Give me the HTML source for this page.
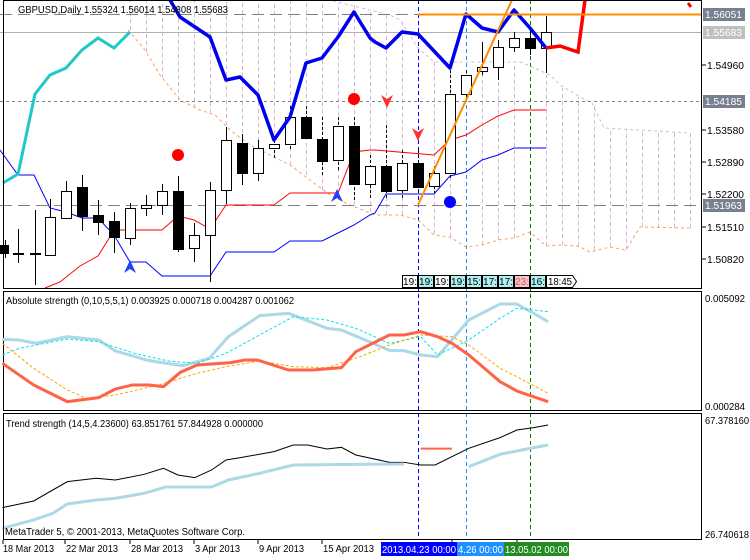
<!DOCTYPE html>
<html><head><meta charset="utf-8"><style>
body{margin:0;background:#fff;width:750px;height:560px;overflow:hidden;font-family:"Liberation Sans",sans-serif}
svg{display:block}
text{font-family:"Liberation Sans",sans-serif;font-size:10px;fill:#000}
</style></head><body>
<svg width="750" height="560" viewBox="0 0 750 560">
<rect width="750" height="560" fill="#fff"/>
<g stroke-dasharray="4,3" stroke-width="1">
<line x1="418.5" y1="0" x2="418.5" y2="540" stroke="#0000ff"/>
<line x1="466.5" y1="0" x2="466.5" y2="540" stroke="#1e90ff"/>
<line x1="530.5" y1="0" x2="530.5" y2="540" stroke="#008000"/>
</g>
<g stroke="#d8b8d8" stroke-dasharray="4,3" stroke-width="1">
<line x1="130.5" y1="30" x2="130.5" y2="0"/><line x1="146.5" y1="52" x2="146.5" y2="0"/><line x1="162.5" y1="78" x2="162.5" y2="0"/><line x1="178.5" y1="100" x2="178.5" y2="0"/><line x1="194.5" y1="108" x2="194.5" y2="0"/><line x1="210.5" y1="113" x2="210.5" y2="0"/><line x1="226.5" y1="125" x2="226.5" y2="0"/><line x1="242.5" y1="140" x2="242.5" y2="0"/><line x1="258.5" y1="148" x2="258.5" y2="0"/><line x1="274.5" y1="155" x2="274.5" y2="0"/><line x1="290.5" y1="165" x2="290.5" y2="0"/><line x1="306.5" y1="175" x2="306.5" y2="0"/><line x1="322.5" y1="190" x2="322.5" y2="0"/><line x1="338.5" y1="200" x2="338.5" y2="3"/><line x1="354.5" y1="205" x2="354.5" y2="5"/><line x1="370.5" y1="212" x2="370.5" y2="10"/><line x1="386.5" y1="215" x2="386.5" y2="15"/><line x1="402.5" y1="215" x2="402.5" y2="22"/><line x1="434.5" y1="234" x2="434.5" y2="62"/><line x1="450.5" y1="237" x2="450.5" y2="62"/><line x1="482.5" y1="245" x2="482.5" y2="62"/><line x1="498.5" y1="240" x2="498.5" y2="62"/><line x1="514.5" y1="238" x2="514.5" y2="62"/><line x1="546.5" y1="246" x2="546.5" y2="75"/><line x1="562.5" y1="245" x2="562.5" y2="88"/><line x1="578.5" y1="246" x2="578.5" y2="97"/><line x1="594.5" y1="250" x2="594.5" y2="105"/><line x1="610.5" y1="247" x2="610.5" y2="128"/><line x1="626.5" y1="250" x2="626.5" y2="130"/><line x1="642.5" y1="227" x2="642.5" y2="131"/><line x1="658.5" y1="228" x2="658.5" y2="132"/><line x1="674.5" y1="228" x2="674.5" y2="132"/><line x1="690.5" y1="228" x2="690.5" y2="133"/>
</g>
<polyline fill="none" stroke="#d8b8d8" stroke-dasharray="3,3" points="285,0 330,0 390,15 400,20 418,48 434,62 520,62 530,66 550,75 560,85 580,97 592,103 604,128 690,133"/>
<polyline fill="none" stroke="#f4a460" stroke-dasharray="3,3" points="128,30 145,50 160,75 180,100 200,110 215,115 230,130 250,145 270,155 290,165 310,180 330,195 350,205 375,215 400,215 418,220 434,235 450,237 466,247 482,245 498,240 514,238 530,232 546,246 560,245 578,246 590,252 610,247 626,250 640,227 690,228"/>
<line x1="0" y1="14.5" x2="702" y2="14.5" stroke="#808080" stroke-dasharray="12,6"/>
<line x1="0" y1="32.5" x2="702" y2="32.5" stroke="#b0b0b0"/>
<line x1="0" y1="101.5" x2="702" y2="101.5" stroke="#808080" stroke-dasharray="3,3"/>
<line x1="0" y1="205.5" x2="702" y2="205.5" stroke="#808080" stroke-dasharray="12,6"/>
<polyline fill="none" stroke="#0000ff" points="0,150 18,175 34,175 50,208 66,212 82,218 98,218 114,235 130,262 146,262 162,276 210,276 226,252 274,252 290,241 322,241 338,233 354,225 370,215 375,213 386,194 434,194 450,176 466,172 482,160 498,155 514,148 546,148"/>
<polyline fill="none" stroke="#ff0000" points="45,288 60,282 80,266 98,256 108,240 114,230 162,230 178,216 194,220 210,229 226,205 274,205 290,193 338,193 354,152 370,150 375,150 434,155 450,140 466,135 482,125 498,116 514,110 546,110"/>
<polyline fill="none" stroke="#20c8c8" stroke-width="3" points="3,183 18,174 35,94 50,75 66,68 82,50 98,38 114,48 130,32"/>
<g stroke="#000" stroke-width="1">
<line x1="5.5" y1="240" x2="5.5" y2="258"/><rect x="0.5" y="245.5" width="8" height="8" fill="#000"/>
<line x1="18.5" y1="229" x2="18.5" y2="263"/><rect x="13.5" y="253.5" width="10" height="1" fill="#fff"/>
<line x1="35.5" y1="210" x2="35.5" y2="285"/><rect x="30.5" y="253.5" width="10" height="1" fill="#fff"/>
<line x1="50.5" y1="199" x2="50.5" y2="256"/><rect x="45.5" y="217.5" width="10" height="38" fill="#fff"/>
<line x1="66.5" y1="181" x2="66.5" y2="218"/><rect x="61.5" y="191.5" width="10" height="27" fill="#fff"/>
<line x1="82.5" y1="175" x2="82.5" y2="231"/><rect x="77.5" y="187.5" width="10" height="29" fill="#000"/>
<line x1="98.5" y1="200" x2="98.5" y2="235"/><rect x="93.5" y="215.5" width="10" height="7" fill="#000"/>
<line x1="114.5" y1="212" x2="114.5" y2="253"/><rect x="109.5" y="221.5" width="10" height="16" fill="#000"/>
<line x1="130.5" y1="203" x2="130.5" y2="245"/><rect x="125.5" y="208.5" width="10" height="30" fill="#fff"/>
<line x1="146.5" y1="195" x2="146.5" y2="216"/><rect x="141.5" y="205.5" width="10" height="3" fill="#fff"/>
<line x1="162.5" y1="184" x2="162.5" y2="215"/><rect x="157.5" y="191.5" width="10" height="14" fill="#fff"/>
<line x1="178.5" y1="176" x2="178.5" y2="252"/><rect x="173.5" y="191.5" width="10" height="58" fill="#000"/>
<line x1="194.5" y1="223" x2="194.5" y2="262"/><rect x="189.5" y="235.5" width="10" height="13" fill="#fff"/>
<line x1="210.5" y1="182" x2="210.5" y2="282"/><rect x="205.5" y="190.5" width="10" height="45" fill="#fff"/>
<line x1="226.5" y1="127" x2="226.5" y2="204"/><rect x="221.5" y="140.5" width="10" height="50" fill="#fff"/>
<line x1="242.5" y1="134" x2="242.5" y2="185"/><rect x="237.5" y="143.5" width="10" height="30" fill="#000"/>
<line x1="258.5" y1="140" x2="258.5" y2="181"/><rect x="253.5" y="148.5" width="10" height="25" fill="#fff"/>
<line x1="274.5" y1="140" x2="274.5" y2="158" stroke-dasharray="3,2"/><rect x="269.5" y="144.5" width="10" height="4" fill="#fff"/>
<line x1="290.5" y1="106" x2="290.5" y2="150" stroke-dasharray="3,2"/><rect x="285.5" y="117.5" width="10" height="27" fill="#fff"/>
<line x1="306.5" y1="106" x2="306.5" y2="140" stroke-dasharray="3,2"/><rect x="301.5" y="117.5" width="10" height="21" fill="#000"/>
<line x1="322.5" y1="117" x2="322.5" y2="175" stroke-dasharray="3,2"/><rect x="317.5" y="139.5" width="10" height="22" fill="#000"/>
<line x1="338.5" y1="117" x2="338.5" y2="172" stroke-dasharray="3,2"/><rect x="333.5" y="126.5" width="10" height="34" fill="#fff"/>
<line x1="354.5" y1="117" x2="354.5" y2="200" stroke-dasharray="3,2"/><rect x="349.5" y="126.5" width="10" height="58" fill="#000"/>
<line x1="370.5" y1="155" x2="370.5" y2="200" stroke-dasharray="3,2"/><rect x="365.5" y="166.5" width="10" height="18" fill="#fff"/>
<line x1="386.5" y1="125" x2="386.5" y2="200" stroke-dasharray="3,2"/><rect x="381.5" y="166.5" width="10" height="25" fill="#000"/>
<line x1="402.5" y1="150" x2="402.5" y2="200" stroke-dasharray="3,2"/><rect x="397.5" y="163.5" width="10" height="27" fill="#fff"/>
<line x1="418.5" y1="150" x2="418.5" y2="195" stroke-dasharray="3,2"/><rect x="413.5" y="163.5" width="10" height="24" fill="#000"/>
<line x1="434.5" y1="166" x2="434.5" y2="195" stroke-dasharray="3,2"/><rect x="429.5" y="173.5" width="10" height="13" fill="#fff"/>
<line x1="450.5" y1="70" x2="450.5" y2="180" stroke-dasharray="3,2"/><rect x="445.5" y="94.5" width="10" height="79" fill="#fff"/>
<line x1="466.5" y1="70" x2="466.5" y2="100" stroke-dasharray="3,2"/><rect x="461.5" y="75.5" width="10" height="19" fill="#fff"/>
<line x1="482.5" y1="42" x2="482.5" y2="75"/><rect x="477.5" y="67.5" width="10" height="4" fill="#fff"/>
<line x1="498.5" y1="40" x2="498.5" y2="80"/><rect x="493.5" y="47.5" width="10" height="20" fill="#fff"/>
<line x1="514.5" y1="32" x2="514.5" y2="52"/><rect x="509.5" y="38.5" width="10" height="9" fill="#fff"/>
<line x1="530.5" y1="30" x2="530.5" y2="55"/><rect x="525.5" y="38.5" width="10" height="10" fill="#000"/>
<line x1="546.5" y1="16" x2="546.5" y2="73"/><rect x="541.5" y="32.5" width="10" height="16" fill="#fff"/>
</g>
<polyline fill="none" stroke="#0000ee" stroke-width="3.5" stroke-linejoin="round" points="170,0 180,17 195,27 210,37 226,80 240,77 258,95 274,140 290,117 306,63 322,58 338,37 354,12 370,38 375,42 386,48 402,32 418,34 450,68 466,14 482,28 498,32 514,10 530,28 546,48"/>
<polyline fill="none" stroke="#ff0000" stroke-width="3.5" points="546,48 560,46 578,52 585,0"/>
<line x1="688" y1="3" x2="691" y2="7" stroke="#ff0000" stroke-width="3"/>
<line x1="418" y1="205" x2="512" y2="0" stroke="#ff8c00" stroke-width="2"/>
<line x1="418" y1="14.5" x2="702" y2="14.5" stroke="#ff8c00" stroke-width="2"/>
<circle cx="178" cy="155" r="6" fill="#ff0000"/>
<circle cx="354" cy="99" r="6" fill="#ff0000"/>
<circle cx="450" cy="202" r="6" fill="#0000ff"/>
<path d="M381,95 L387,108 L393,95 L387,99Z" fill="#ff3030"/>
<path d="M412,128 L418,141 L424,128 L418,132Z" fill="#ff3030"/>
<path d="M331,202 L337,189 L343,202 L337,198Z" fill="#2040ff"/>
<path d="M124,273 L130,260 L136,273 L130,269Z" fill="#2040ff"/>
<g style="font-size:9px">
<rect x="402.5" y="275.5" width="15" height="12" fill="#fff" stroke="#000"/><text x="403" y="285" textLength="14" lengthAdjust="spacingAndGlyphs">19:</text>
<rect x="418.5" y="275.5" width="15" height="12" fill="#b0f0f0" stroke="#000"/><text x="419" y="285" textLength="14" lengthAdjust="spacingAndGlyphs">19:</text>
<rect x="434.5" y="275.5" width="15" height="12" fill="#fff" stroke="#000"/><text x="435" y="285" textLength="14" lengthAdjust="spacingAndGlyphs">19:</text>
<rect x="450.5" y="275.5" width="15" height="12" fill="#b0f0f0" stroke="#000"/><text x="451" y="285" textLength="14" lengthAdjust="spacingAndGlyphs">19:</text>
<rect x="466.5" y="275.5" width="15" height="12" fill="#b0f0f0" stroke="#000"/><text x="467" y="285" textLength="14" lengthAdjust="spacingAndGlyphs">15:</text>
<rect x="482.5" y="275.5" width="15" height="12" fill="#b0f0f0" stroke="#000"/><text x="483" y="285" textLength="14" lengthAdjust="spacingAndGlyphs">17:</text>
<rect x="498.5" y="275.5" width="15" height="12" fill="#b0f0f0" stroke="#000"/><text x="499" y="285" textLength="14" lengthAdjust="spacingAndGlyphs">17:</text>
<rect x="514.5" y="275.5" width="15" height="12" fill="#ffc0c8" stroke="#000"/><text x="515" y="285" textLength="14" lengthAdjust="spacingAndGlyphs" style="fill:#c06070">23:</text>
<rect x="530.5" y="275.5" width="15" height="12" fill="#b0f0f0" stroke="#000"/><text x="531" y="285" textLength="14" lengthAdjust="spacingAndGlyphs">16:</text>
<path d="M546.5,275.5 H572.5 L576.5,281.5 L572.5,287.5 H546.5Z" fill="#fff" stroke="#000"/><text x="548" y="285" textLength="24" lengthAdjust="spacingAndGlyphs">18:45</text>
</g>
<text x="18" y="13" textLength="210" lengthAdjust="spacingAndGlyphs">GBPUSD,Daily  1.55324 1.56014 1.54808 1.55683</text>
<rect x="3.5" y="0.5" width="698" height="288" fill="none" stroke="#000"/>
<g stroke="#000"><line x1="702" y1="65" x2="706" y2="65"/><line x1="702" y1="130" x2="706" y2="130"/><line x1="702" y1="162" x2="706" y2="162"/><line x1="702" y1="194" x2="706" y2="194"/><line x1="702" y1="227" x2="706" y2="227"/><line x1="702" y1="259" x2="706" y2="259"/></g>
<g>
<rect x="703" y="8" width="42" height="13" fill="#788090"/><text x="705" y="18" textLength="37" lengthAdjust="spacingAndGlyphs" style="fill:#fff">1.56051</text>
<rect x="703" y="26" width="42" height="13" fill="#c0c0c0"/><text x="705" y="36" textLength="37" lengthAdjust="spacingAndGlyphs" style="fill:#fff">1.55683</text>
<text x="707" y="69" textLength="37" lengthAdjust="spacingAndGlyphs">1.54960</text>
<rect x="703" y="95" width="42" height="13" fill="#788090"/><text x="705" y="105" textLength="37" lengthAdjust="spacingAndGlyphs" style="fill:#fff">1.54185</text>
<text x="707" y="134" textLength="37" lengthAdjust="spacingAndGlyphs">1.53580</text>
<text x="707" y="166" textLength="37" lengthAdjust="spacingAndGlyphs">1.52890</text>
<text x="707" y="198" textLength="37" lengthAdjust="spacingAndGlyphs">1.52200</text>
<rect x="703" y="199" width="42" height="13" fill="#788090"/><text x="705" y="209" textLength="37" lengthAdjust="spacingAndGlyphs" style="fill:#fff">1.51963</text>
<text x="707" y="231" textLength="37" lengthAdjust="spacingAndGlyphs">1.51510</text>
<text x="707" y="263" textLength="37" lengthAdjust="spacingAndGlyphs">1.50820</text>
</g>
<rect x="3.5" y="291.5" width="698" height="119" fill="none" stroke="#000"/>
<g transform="translate(0,285) scale(0.4808,0.3333)" fill="none">
<polyline vector-effect="non-scaling-stroke" stroke="#add8e6" stroke-width="3" points="5,163 40,165 75,175 140,155 205,165 240,198 310,227 380,242 435,220 475,155 540,92 600,85 680,130 710,135 810,196 840,197 875,210 910,215 975,105 1040,57 1075,57 1110,85 1140,110"/>
<polyline vector-effect="non-scaling-stroke" stroke="#00e5ee" stroke-dasharray="3,2" points="5,210 40,190 140,162 205,170 280,205 350,228 410,235 470,205 540,150 610,95 680,105 740,130 810,175 875,155 910,210 975,165 1040,100 1075,70 1140,80"/>
<polyline vector-effect="non-scaling-stroke" stroke="#ffa500" stroke-dasharray="3,2" points="5,175 70,250 140,315 180,340 240,330 330,300 410,265 470,245 540,228 610,245 680,248 740,220 810,180 875,150 940,155 975,180 1040,250 1075,275 1140,325"/>
<polyline vector-effect="non-scaling-stroke" stroke="#ff6347" stroke-width="3" points="5,235 70,300 140,350 205,338 240,312 275,300 310,300 340,305 375,262 410,240 480,233 510,225 535,225 600,255 650,255 710,248 740,200 810,150 840,150 875,140 910,155 940,175 975,210 1040,290 1075,318 1140,350"/>
<polyline vector-effect="non-scaling-stroke" stroke="#000" stroke-width="1" points="5,668 70,648 140,590 200,580 240,585 300,568 340,550 370,570 405,578 440,555 470,525 500,518 570,500 610,480 640,480 680,492 710,487 740,510 810,532 840,532 875,540 905,540 975,490 1040,458 1075,435 1110,428 1140,420"/>
<polyline vector-effect="non-scaling-stroke" stroke="#add8e6" stroke-width="3" points="5,730 70,705 110,685 140,657 200,645 240,640 300,625 345,606 440,606 475,585 540,565 610,540 840,537"/>
<polyline vector-effect="non-scaling-stroke" stroke="#add8e6" stroke-width="3" points="975,545 1040,508 1110,488 1140,480"/>
<line vector-effect="non-scaling-stroke" stroke="#ff6347" stroke-width="2" x1="875" y1="491" x2="940" y2="491"/>
</g>
<text x="6" y="304" textLength="288" lengthAdjust="spacingAndGlyphs">Absolute strength (0,10,5,5,1) 0.003925 0.000718 0.004287 0.001062</text>
<text x="705" y="302" textLength="40" lengthAdjust="spacingAndGlyphs">0.005092</text>
<text x="705" y="410" textLength="40" lengthAdjust="spacingAndGlyphs">0.000284</text>
<rect x="3.5" y="413.5" width="698" height="126" fill="none" stroke="#000"/>
<text x="6" y="427" textLength="257" lengthAdjust="spacingAndGlyphs">Trend strength (14,5,4.23600) 63.851761 57.844928 0.000000</text>
<text x="705" y="424" textLength="44" lengthAdjust="spacingAndGlyphs">67.378160</text>
<text x="705" y="538" textLength="44" lengthAdjust="spacingAndGlyphs">26.740618</text>
<text x="5" y="535" textLength="240" lengthAdjust="spacingAndGlyphs">MetaTrader 5, © 2001-2013, MetaQuotes Software Corp.</text>
<g stroke="#000"><line x1="3" y1="540" x2="3" y2="544"/><line x1="65" y1="540" x2="65" y2="544"/><line x1="130" y1="540" x2="130" y2="544"/><line x1="194" y1="540" x2="194" y2="544"/><line x1="258" y1="540" x2="258" y2="544"/><line x1="322" y1="540" x2="322" y2="544"/><line x1="452" y1="540" x2="452" y2="544"/><line x1="517" y1="540" x2="517" y2="544"/></g>
<text x="3" y="552" textLength="51" lengthAdjust="spacingAndGlyphs">18 Mar 2013</text>
<text x="66" y="552" textLength="52" lengthAdjust="spacingAndGlyphs">22 Mar 2013</text>
<text x="131" y="552" textLength="52" lengthAdjust="spacingAndGlyphs">28 Mar 2013</text>
<text x="195" y="552" textLength="45" lengthAdjust="spacingAndGlyphs">3 Apr 2013</text>
<text x="259" y="552" textLength="45" lengthAdjust="spacingAndGlyphs">9 Apr 2013</text>
<text x="323" y="552" textLength="51" lengthAdjust="spacingAndGlyphs">15 Apr 2013</text>
<rect x="381" y="542" width="76" height="14" fill="#0000ff"/><text x="382" y="553" textLength="74" lengthAdjust="spacingAndGlyphs" style="fill:#fff">2013.04.23 00:00</text>
<rect x="457" y="542" width="47" height="14" fill="#1e90ff"/><text x="458" y="553" textLength="45" lengthAdjust="spacingAndGlyphs" style="fill:#fff">4.26 00:00</text>
<rect x="504" y="542" width="65" height="14" fill="#228b22"/><text x="505" y="553" textLength="63" lengthAdjust="spacingAndGlyphs" style="fill:#fff">13.05.02 00:00</text>
</svg>
</body></html>
